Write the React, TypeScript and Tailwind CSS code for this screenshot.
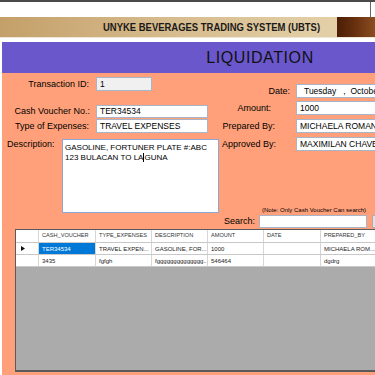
const cols = [
  { key: "CASH_VOUCHER", w: "w-[57px]" },
  { key: "TYPE_EXPENSES", w: "w-[56px]" },
  { key: "DESCRIPTION", w: "w-[56px]" },
  { key: "AMOUNT", w: "w-[56px]" },
  { key: "DATE", w: "w-[57px]" },
  { key: "PREPARED_BY", w: "w-[90px]" },
];

const rows = [
  ["TER34534", "TRAVEL EXPEN...", "GASOLINE, FOR...", "1000", "", "MICHAELA ROM..."],
  ["3435", "fgfgh", "fgggggggggggggg...", "546464", "", "dgdrg"],
];

function Field({ value, w, gray }: { value: string; w: string; gray?: boolean }) {
  return (
    <div
      className={`${w} h-full border border-[#a8b4c8] ${gray ? "bg-[#f0f0f0]" : "bg-white"} flex items-center pl-[3px] text-[8.5px] leading-none whitespace-nowrap overflow-hidden`}
    >
      {value}
    </div>
  );
}

function RightRow({ label, pr, value, mt }: { label: string; pr: string; value: React.ReactNode; mt: string }) {
  return (
    <div className={`flex h-[14px] ${mt}`}>
      <div className={`w-[74px] text-right ${pr} text-[9px] leading-[14px] whitespace-nowrap`}>{label}</div>
      <div className="w-[130px] h-full border border-[#a8b4c8] bg-white flex items-center pl-[3px] text-[8.5px] leading-none whitespace-nowrap overflow-hidden">
        {value}
      </div>
    </div>
  );
}

export default function App() {
  return (
    <div className="w-[375px] h-[375px] overflow-hidden bg-white font-['Liberation_Sans',Arial,sans-serif] text-black">
      <div className="h-[2px] bg-[#4a4a4a]" />
      <div className="h-[15px] flex justify-end">
        <div className="w-px bg-[#666] mr-[4px]" />
      </div>
      <div className="h-[20px] flex">
        <div className="w-[337px] bg-linear-to-r from-[#c4a069] via-[#d6bb8d] to-[#e4d0a8] flex items-center pl-[103px]">
          <span className="inline-block origin-left scale-x-[0.86] font-bold text-[11px] text-[#1a1a1a] whitespace-nowrap">
            UNYKE BEVERAGES TRADING SYSTEM (UBTS)
          </span>
        </div>
        <div className="flex-1 bg-linear-to-r from-[#4b1e06] via-[#6a3210] to-[#8a4e22]" />
      </div>
      <div className="h-px bg-[#eee6d4]" />
      <div className="h-[4px]" />
      <div className="ml-[2px] w-[516px]">
        <div className="h-[31px] bg-[#6a57cc] flex items-center justify-center text-[16px] text-[#111] tracking-[0.6px]">
          LIQUIDATION
        </div>
        <div className="bg-[#ffa07a] h-[302px]">
          <div className="flex h-[155px]">
            {/* left column */}
            <div className="w-[220px] flex flex-col">
              <div className="flex h-[14px] mt-[4px]">
                <div className="w-[87px] text-right text-[9px] leading-[14px]">Transaction ID:</div>
                <div className="ml-[7px] h-full">
                  <Field value="1" w="w-[56px]" gray />
                </div>
              </div>
              <div className="flex h-[13px] mt-[14px]">
                <div className="w-[88px] text-right text-[9px] leading-[13px] whitespace-nowrap">Cash Voucher No.:</div>
                <div className="ml-[6px] h-full">
                  <Field value="TER34534" w="w-[112px]" />
                </div>
              </div>
              <div className="flex h-[14px] mt-[1px]">
                <div className="w-[87px] text-right text-[9px] leading-[14px] whitespace-nowrap">Type of Expenses:</div>
                <div className="ml-[7px] h-full">
                  <Field value="TRAVEL EXPENSES" w="w-[112px]" />
                </div>
              </div>
              <div className="flex mt-[6px]">
                <div className="w-[60px] pl-[5px] text-[9px] leading-[11px]">Description:</div>
                <div className="w-[157px] h-[74px] border border-[#8ea6cf] bg-white px-[2px] pt-[3px] text-[8px] leading-[10px] whitespace-nowrap overflow-hidden">
                  GASOLINE, FORTUNER PLATE #:ABC
                  <br />
                  123 BULACAN TO LA
                  <span className="inline-block w-px h-[9px] bg-black align-middle" />
                  GUNA
                </div>
              </div>
            </div>
            {/* right column */}
            <div className="flex-1 flex flex-col">
              <RightRow
                label="Date:"
                pr="pr-[6px]"
                mt="mt-[11px]"
                value={
                  <span className="pl-[4px]">
                    Tuesday&nbsp;&nbsp;&nbsp;,&nbsp;&nbsp;October 21, 2014
                  </span>
                }
              />
              <RightRow label="Amount:" pr="pr-[25px]" mt="mt-[3px]" value="1000" />
              <RightRow label="Prepared By:" pr="pr-[21px]" mt="mt-[4px]" value="MICHAELA ROMAN" />
              <RightRow label="Approved By:" pr="pr-[20px]" mt="mt-[4px]" value="MAXIMILAN CHAVEZ" />
              <div className="mt-[55px] pl-[40px] text-[6px] leading-[8px] whitespace-nowrap">
                (Note: Only Cash Voucher Can search)
              </div>
              <div className="flex h-[13px] mt-[1px]">
                <div className="w-[37px] pl-[2px] text-[9px] leading-[13px]">Search:</div>
                <div className="w-[108px] h-full border border-[#a8b4c8] bg-white" />
                <div className="ml-[5px] w-[30px] h-full border border-[#adadad] bg-[#e1e1e1]" />
              </div>
            </div>
          </div>
          {/* grid */}
          <div className="mt-[1px] ml-[13px] w-[600px] h-[143px] border border-b-2 border-[#5a5a5a] bg-[#ababab] text-[6px] leading-none">
            <div className="flex h-[13px] bg-white border-b border-[#c8c8c8]">
              <div className="w-[23px] border-r border-[#d6d6d6]" />
              {cols.map((c) => (
                <div
                  key={c.key}
                  className={`${c.w} border-r border-[#d6d6d6] flex items-center pl-[3px] text-[5.6px] text-[#333] whitespace-nowrap overflow-hidden`}
                >
                  {c.key}
                </div>
              ))}
            </div>
            {rows.map((r, i) => (
              <div key={i} className="flex h-[12px] bg-white border-b border-[#c8c8c8]">
                <div className="w-[23px] border-r border-[#d6d6d6] flex items-center pl-[5px]">
                  {i === 0 && (
                    <svg width="4" height="5" viewBox="0 0 4 5">
                      <path d="M0 0 L4 2.5 L0 5 Z" fill="#111" />
                    </svg>
                  )}
                </div>
                {r.map((v, j) => (
                  <div
                    key={j}
                    className={`${cols[j].w} border-r border-[#d6d6d6] flex items-center pl-[3px] whitespace-nowrap overflow-hidden ${
                      i === 0 && j === 0 ? "bg-[#0078d7] text-white" : "text-[#222]"
                    }`}
                  >
                    {v}
                  </div>
                ))}
              </div>
            ))}
          </div>
        </div>
      </div>
    </div>
  );
}
